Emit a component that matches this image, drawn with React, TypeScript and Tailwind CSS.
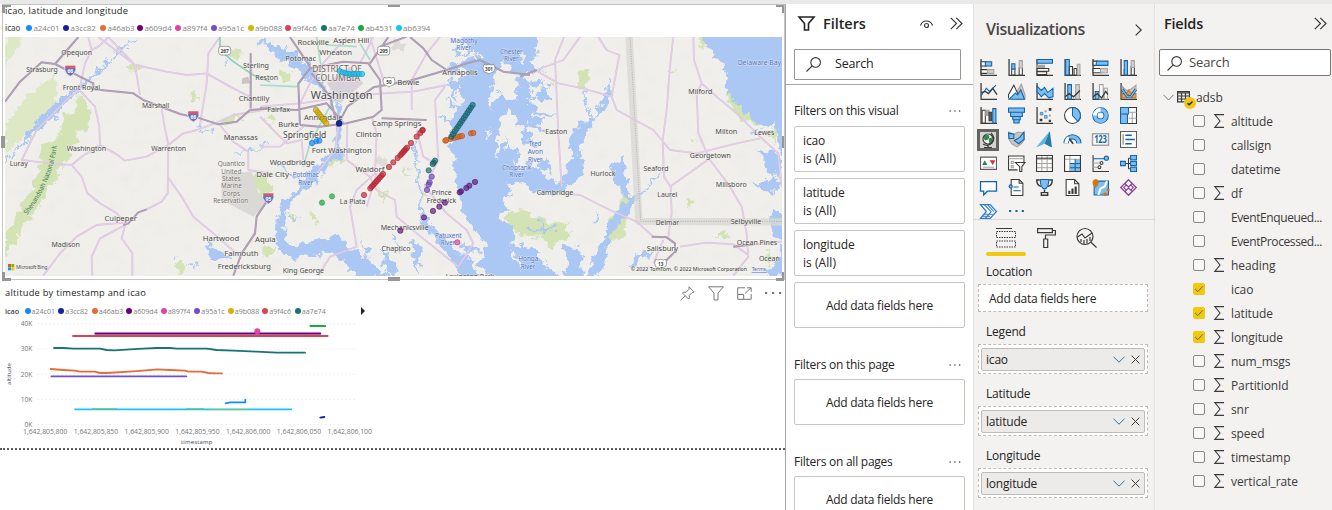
import React from "react";

const D = "#3b3a39";
const B = "#0f65ab";
const L = "#7fbcf0";
const G = "#a6a4a2";

type Pt = [number, number];

const Icon = ({ children, className = "h-[17px] w-[17px]", box = "0 0 16 16" }: { children: React.ReactNode; className?: string; box?: string }) => (
  <svg viewBox={box} className={`${className} shrink-0 overflow-visible`} fill="none" stroke={D} strokeWidth={1}>
    {children}
  </svg>
);

/* ---------- legends ---------- */
const mapLegend = [
  ["a24c01", "bg-[#118dff]", "w-[37px]"],
  ["a3cc82", "bg-[#12239e]", "w-[37px]"],
  ["a46ab3", "bg-[#e66c37]", "w-[37px]"],
  ["a609d4", "bg-[#6b007b]", "w-[38px]"],
  ["a897f4", "bg-[#e044a7]", "w-[35.5px]"],
  ["a95a1c", "bg-[#744ec2]", "w-[37px]"],
  ["a9b088", "bg-[#d9b300]", "w-[37.5px]"],
  ["a9f4c6", "bg-[#d64550]", "w-[35.5px]"],
  ["aa7e74", "bg-[#197278]", "w-[37.5px]"],
  ["ab4531", "bg-[#1aab40]", "w-[37.5px]"],
  ["ab6394", "bg-[#15c6f4]", "w-[37px]"],
];
const chartWidths = ["w-[33.7px]", "w-[33.5px]", "w-[34.5px]", "w-[34.5px]", "w-[33.5px]", "w-[33.5px]", "w-[34.5px]", "w-[32.5px]", "w-[34px]"];

/* ---------- map ---------- */
const Label = ({ x, y, w, s = 23, c = "#4b4b4b", children }: { x: number; y: number; w: number; s?: number; c?: string; children: string }) => (
  <text x={x - w / 2} y={y + s * 0.34} fontSize={s} fill={c} stroke="#f5f4f1" strokeWidth={s / 7} strokeOpacity={0.7} paintOrder="stroke" textLength={w} lengthAdjust="spacingAndGlyphs">
    {children}
  </text>
);

const Dots = ({ pts, fill, edge }: { pts: Pt[]; fill: string; edge: string }) => (
  <g fill={fill} fillOpacity={0.7} stroke={edge} strokeWidth={2} strokeOpacity={0.85}>
    {pts.map(([x, y], i) => (
      <circle key={i} cx={x} cy={y} r={8} />
    ))}
  </g>
);

const line = (a: Pt, b: Pt, n: number): Pt[] =>
  Array.from({ length: n }, (_, i) => [a[0] + ((b[0] - a[0]) * i) / (n - 1), a[1] + ((b[1] - a[1]) * i) / (n - 1)]);

const Roads = ({ d }: { d: string }) => (
  <>
    <path d={d} stroke="#dac2df" strokeWidth={5.5} />
    <path d={d} stroke="#e8d9ea" strokeWidth={2} />
  </>
);
const Highways = ({ d }: { d: string }) => (
  <>
    <path d={d} stroke="#a594ac" strokeWidth={6} />
    <path d={d} stroke="#bcaec1" strokeWidth={2} />
  </>
);

const Interstate = ({ x, y, n }: { x: number; y: number; n: string }) => (
  <g>
    <path d={`M${x - 15} ${y - 14}h30l2 12q-3 14-17 20q-14-6-17-20z`} fill="#6a72b8" stroke="#fff" strokeWidth={2} />
    <path d={`M${x - 15} ${y - 14}h30v7h-30z`} fill="#dd5a62" />
    <text x={x} y={y + 9} fontSize={15} fontWeight={700} fill="#fff" textAnchor="middle">{n}</text>
  </g>
);
const Shield = ({ x, y, n }: { x: number; y: number; n: string }) => (
  <g>
    <path d={`M${x - 15} ${y - 14}q7 4 15 0q8 4 15 0q6 12 0 22q-8 2-15 7q-7-5-15-7q-6-10 0-22z`} fill="#fff" stroke="#777" strokeWidth={2} />
    <text x={x} y={y + 6} fontSize={14} fontWeight={700} fill="#444" textAnchor="middle">{n}</text>
  </g>
);

const MapCanvas = () => (
  <svg viewBox="5 37 777 239" className="ml-[3px] block h-[239px] w-[777px] bg-[#f0efeb] font-['Noto_Sans','Open_Sans',sans-serif]" fill="none" strokeLinejoin="round">
    <defs>
      <filter id="shore" x="0" y="0" width="1332" height="510" filterUnits="userSpaceOnUse">
        <feTurbulence type="fractalNoise" baseFrequency="0.13" numOctaves="4" seed="7" />
        <feDisplacementMap in="SourceGraphic" scale="13" xChannelSelector="R" yChannelSelector="G" />
      </filter>
      <filter id="relief" x="0" y="0" width="1332" height="510" filterUnits="userSpaceOnUse">
        <feTurbulence type="fractalNoise" baseFrequency="0.06" numOctaves="3" seed="3" />
        <feColorMatrix values="0 0 0 0 .7  0 0 0 0 .7  0 0 0 0 .68  0 1.6 0 0 -.72" />
      </filter>
    </defs>
    <rect x="5" y="37" width="220" height="239" filter="url(#relief)" opacity=".18" />

    <g filter="url(#shore)">
      {/* parks */}
      <g fill="#d3e3b4">
        <g transform="scale(.33333)">
          <path d="M15 380L60 320L110 260L165 220L172 280L160 330L110 370L60 420L15 455Z" fill="#dfe8c4" />
          <path d="M15 111H65L60 140L15 190Z" fill="#dfe8c4" />
          <path d="M230 285L262 300L268 350L262 395L225 390L235 420L215 440L205 480L180 500L175 540L150 560L130 600L95 640L70 680L50 720L15 770V700L45 660L60 620L90 580L110 520L130 480L125 430L165 420L195 370L190 345L230 340Z" />
          <path d="M375 200L418 198L415 212L380 210ZM575 275L590 275L600 300L575 305ZM640 365L700 345L725 352L690 375ZM520 790L550 785L560 805L540 820ZM755 530L810 520V590L780 590ZM675 155L720 150L715 180Z" />
        </g>
        <g transform="translate(260) scale(.33333)">
          <path d="M0 545L20 540L35 570L15 590L0 590ZM190 480L250 470L255 482L200 495ZM90 640L110 650L100 670ZM150 640L180 650L165 665ZM350 560L380 580L370 610ZM0 750L40 740L50 760L15 765ZM740 640L785 630L800 700L750 690ZM480 560L500 590L480 590Z" />
          <path d="M60 220L85 215L95 250L75 245ZM20 350L45 360L30 375ZM440 500L450 530L430 520Z" />
          <path d="M345 465L380 475L370 500L350 495ZM400 120L440 130L430 160L400 150Z" fill="#dddcd8" />
        </g>
        <g transform="translate(520) scale(.33333)">
          <path d="M180 215L208 208L200 250L176 265ZM445 210L475 208L470 220L450 222ZM505 423L530 418L520 436ZM500 600L520 602L518 617L502 615ZM530 115L557 111L553 150L540 140ZM620 275L655 310L715 365L740 385L680 365L640 330ZM305 570L335 580L325 620L315 680L320 710L260 727L258 700L270 650L300 625ZM85 245L105 250L100 260Z" />
          <path d="M-20 650L60 655L90 670L130 680L150 705L100 740L50 705L0 705ZM750 400L768 370L765 440L750 420ZM735 780L755 740L745 800ZM580 710L620 690L630 715Z" />
        </g>
      </g>

      {/* water */}
      <g fill="#abc7f3">
        <g transform="translate(410 36) scale(.33333)">
          <path d="M150 -20L160 20L185 40L205 60L212 72L195 60L170 62L150 85L172 100L160 118L140 140L160 150L140 175L165 190L150 210L135 235L120 260L125 290L118 320L128 350L132 400L140 430L145 480L160 520L175 560L200 590L225 620L228 640L215 665L200 690L225 700L240 730H450L420 700L395 690L370 650L330 640L310 625L300 640L318 600L290 560L265 530L290 520L275 495L300 470L290 440L340 440L360 462L400 470L440 478L470 455L450 440L410 425L380 395L345 370L350 320L380 330L350 290L355 260L400 290L380 250L360 230L390 220L350 190L370 180L350 150L345 120L375 100L360 70L380 40L375 -20Z" />
          <path fill="#f0efeb" d="M280 75L265 110L250 150L240 190L232 222L245 215L258 180L275 160L280 190L300 195L320 190L310 165L330 150L315 130L340 120L310 108L295 90Z" />
          <path fill="#f0efeb" d="M300 220L275 250L265 290L262 320L255 350L258 365L270 330L285 300L290 350L300 320L320 350L325 385L300 370L330 400L365 405L350 370L358 340L335 310L340 270L320 250ZM235 275Q215 290 235 310L238 305Q226 290 240 278ZM330 50L345 55L342 85L332 80ZM310 650L345 668L350 720L330 710Z" />
          <path fill="#d3e3b4" d="M295 528L340 518L370 545L420 560L475 560L470 600L430 620L380 605L330 600L312 570Z" />
          <path stroke="#abc7f3" strokeWidth="7" d="M130 40L155 60M110 85L150 100M115 150L155 160M110 190L140 220M95 240L125 260M375 180L420 190L400 150M370 230L430 240M380 260L410 250M340 140L380 150L400 130M300 440L290 400M340 410L400 400M320 260L350 240M210 640L170 650L150 625M350 580L400 585L440 575M390 560L400 600" />
        </g>
        <g transform="translate(260) scale(.33333)">
          <path d="M228 310L243 320L247 380L239 440L254 462L246 472L207 488L186 530L144 562L97 598L80 640L72 700L90 738L130 728L200 714L235 700L262 735L290 760L340 790L390 835H290L255 790L235 770L215 755L160 765L100 778L62 762L47 720L50 650L70 600L110 570L140 530L158 500L203 475L228 440L232 380Z" />
          <path d="M484 640L497 660L522 686L560 718L590 750L640 790L660 835H610L570 770L520 715L482 668Z" />
          <path d="M300 705L320 750L338 827H315L318 770ZM370 730L380 770L410 800L400 827H385L368 780Z" />
          <g stroke="#abc7f3">
            <path strokeWidth="8" d="M0 125L60 145L110 160L150 200L190 260L230 310" />
            <path strokeWidth="6" d="M462 420L470 500L480 560L484 650" />
            <path strokeWidth="5" d="M40 485L70 500L95 525L130 545M80 640L110 660M400 700L420 760M450 720L480 740L470 827M560 190L600 200L570 230L600 260L570 280L590 300M575 320L600 330M650 150L600 170" />
          </g>
        </g>
        <g transform="translate(520) scale(.33333)">
          <path d="M548 100L560 140L600 180L620 230L617 270L640 300L700 360L735 388L765 370L778 440L800 520V100Z" />
          <path d="M705 440L735 455L775 462L785 500L765 530L740 515L735 475ZM690 548L740 545L770 530L786 560L750 580L725 562ZM745 650L770 630L800 660V830H735L765 790L785 730L755 700Z" />
          <path d="M238 735L272 690L262 760L235 835H195L215 780ZM125 740L180 740L190 835H130L145 790ZM0 730L55 760L75 780L70 835H0Z" />
          <g stroke="#abc7f3">
            <path strokeWidth="11" d="M120 555L145 550L175 525L190 485L160 455" />
            <path strokeWidth="5" d="M170 470L150 430L160 390L215 355L260 320L275 240M190 270L195 300L215 350M420 515L380 570L330 600L290 640L265 680L260 720M330 600L285 550L275 510L310 470M235 630L225 670M405 750L350 770L330 800" />
            <path strokeWidth="9" d="M325 602L285 645L262 700" />
            <path strokeWidth="5" d="M60 150L30 180M40 250L90 260M30 300L90 290M20 330L80 340M40 370L70 390M80 480L50 490L90 520M690 400L720 390M30 220L70 210" />
          </g>
        </g>
        <g transform="scale(.33333)" stroke="#abc7f3" strokeWidth="4">
          <path d="M15 485L60 440L100 380L150 330L180 290L235 265L290 215L330 180L360 150L410 111M590 385L640 395M710 460L810 430M520 780L530 770M620 730L640 780L700 770M560 800L600 790M675 180L680 200" strokeDasharray="22 3" />
        </g>
      </g>
    </g>

    {/* roads */}
    <g transform="scale(.33333)">
      <path d="M665 520L755 515L780 590L810 600L760 650L665 600Z" fill="#dad9d5" />
      <path d="M727 235L745 230L750 250L725 252Z" fill="#cdc2c6" />
      <Roads d="M265 111L275 150L255 190L238 270L210 290L160 340L110 390L65 480L150 490L215 495L245 470L300 435L345 460L375 482L440 470L505 435L550 400L590 390L640 372L700 345L790 330M238 270L285 320L298 380L300 435M215 495L245 530L262 580L300 610L350 640L375 665M325 111L295 140L275 150M325 111L405 195L420 285M295 111L405 195L500 215L560 225L620 220L700 265L770 300M660 111L625 160L620 250L600 375M485 325L492 370L505 435L503 580L485 605L440 628M503 530L545 590L580 650L640 700L720 770M660 375L700 425L745 455L745 510L810 520M375 675L300 715L275 770L277 827M375 675L365 715L397 760V827M375 668L290 675L230 710L180 760L130 827" />
      <path d="M660 111V150L700 185L760 225L810 245" stroke="#8fcdb9" strokeWidth="5" />
      <Highways d="M15 305L60 245L125 187L165 192L280 250V268L400 280L430 300L540 342L600 355L655 373L710 365L750 330L810 325M165 192L235 111M752 325V160M810 590L770 650L765 700L725 760L700 827M370 675L385 670L415 637L440 628" />
    </g>
    <g transform="translate(260) scale(.33333)">
      <Roads d="M0 320L120 310L260 290L370 280L460 275L560 255M120 310L150 250L180 200L260 111M235 380L225 450L170 520M262 370L260 480L330 530L350 570L405 600L410 650L470 700L595 800L640 730L620 690L560 640M335 350L350 400L345 520L290 570L270 620L290 740L210 770L175 827M455 330L455 240L500 160L540 111M555 260L525 300L535 480L495 560L560 640M470 390L490 470L525 490M370 240L330 111M300 190L340 111M0 350L80 430L125 420L130 480M0 440L60 440L130 380M190 400L155 440M320 620L350 520" />
      <path d="M0 255L110 260L140 220M190 250L170 111M300 130L330 180M220 300L150 430L130 500M200 135L290 140" stroke="#a5dccb" strokeWidth="5" />
      <path d="M200 250L270 200L310 250L240 310Z" fill="#d9d1da" />
      <Highways d="M120 375L115 250L150 205L250 185L325 190L360 240L365 330L340 350L260 370L180 380L120 375M330 190L385 111M0 325L110 330L200 310L235 350M230 380L262 320L340 262L450 242L560 210L620 190L660 180L730 215L810 225M365 355L500 360M450 111L490 145L515 180L560 210M360 140L440 110M150 200L90 111M155 220L210 290L225 350" />
    </g>
    <g transform="translate(520) scale(.33333)">
      <path d="M327 100L357 664L800 666" stroke="#d9d8d4" strokeWidth="22" strokeOpacity=".8" />
      <path d="M330 105L362 664H800" stroke="#999" strokeWidth="2" strokeDasharray="3 4" />
      <Roads d="M132 111L105 180L115 400L125 560M45 210L115 250L190 265L275 290L290 330L400 390L450 450L530 460L650 430L720 415M180 111L130 180L50 210M235 111L260 150L298 165L275 290M460 111L450 200L440 330L428 420L432 530L452 560L455 640L445 710M520 111L522 180L545 250L530 280L535 400L570 480L630 560L665 620L680 700L685 770L640 827M545 250L590 290L650 340L720 410L775 460L785 560M570 475L450 560M180 585L270 630L350 665L400 710M180 585L130 580M480 740L560 728L640 733L685 765M640 740L786 725M430 720L400 790" />
      <Highways d="M0 230L50 210M395 710L440 712L465 730V755L430 790M640 740L700 733" />
    </g>

    {/* labels */}
    <g transform="scale(.33333)">
      <Label x={230} y={156} w={92}>Opequon</Label>
      <Label x={126} y={208} w={94}>Strasburg</Label>
      <Label x={244} y={263} w={112}>Front Royal</Label>
      <Label x={467} y={315} w={82}>Marshall</Label>
      <Label x={768} y={196} w={78}>Sterling</Label>
      <Label x={800} y={233} w={68}>Reston</Label>
      <Label x={762} y={296} w={92}>Chantilly</Label>
      <Label x={836} y={329} w={68}>Fairfax</Label>
      <Label x={259} y={445} w={118}>Washington</Label>
      <Label x={506} y={445} w={105}>Warrenton</Label>
      <Label x={722} y={413} w={102}>Manassas</Label>
      <Label x={56} y={490} w={54}>Luray</Label>
      <Label x={362} y={655} w={97}>Culpeper</Label>
      <Label x={197} y={733} w={85}>Madison</Label>
      <Label x={663} y={714} w={109}>Hartwood</Label>
      <Label x={796} y={718} w={62}>Aquia</Label>
      <Label x={724} y={760} w={102}>Falmouth</Label>
      <Label x={733} y={799} w={160}>Fredericksburg</Label>
      <Label x={694} y={491} w={82} s={20} c="#77736f">Quantico</Label>
      <Label x={694} y={514} w={60} s={20} c="#77736f">United</Label>
      <Label x={694} y={536} w={56} s={20} c="#77736f">States</Label>
      <Label x={694} y={558} w={62} s={20} c="#77736f">Marine</Label>
      <Label x={694} y={580} w={52} s={20} c="#77736f">Corps</Label>
      <Label x={692} y={602} w={105} s={20} c="#77736f">Reservation</Label>
      <path id="ridge" d="M82 645Q158 545 171 432" />
      <text fontSize="21" fill="#3f7d55"><textPath href="#ridge" textLength="228" lengthAdjust="spacingAndGlyphs">Shenandoah National Park</textPath></text>
      <Interstate x={211} y={211} n="66" />
      <Interstate x={580} y={348} n="66" />
      <Interstate x={805} y={594} n="95" />
      <rect x="656" y="139" width="36" height="26" rx="8" fill="#fff" stroke="#777" strokeWidth="2" />
      <text x="674" y="158" fontSize="15" fontWeight="700" fill="#444" textAnchor="middle">267</text>
      <path d="M24 792h9v9h-9z" fill="#f25022" /><path d="M34 792h9v9h-9z" fill="#7fba00" /><path d="M24 802h9v9h-9z" fill="#00a4ef" /><path d="M34 802h9v9h-9z" fill="#ffb900" />
      <text x="48" y="808" fontSize="15" fill="#555" textLength="94">Microsoft Bing</text>
    </g>
    <g transform="translate(260) scale(.33333)">
      <Label x={160} y={126} w={95}>Rockville</Label>
      <Label x={274} y={123} w={108} s={22}>Aspen Hill</Label>
      <Label x={227} y={158} w={98}>Wheaton</Label>
      <Label x={122} y={174} w={92}>Potomac</Label>
      <Label x={231} y={206} w={148} s={27} c="#7b5f5f">DISTRICT OF</Label>
      <Label x={233} y={235} w={134} s={27} c="#7b5f5f">COLUMBIA</Label>
      <Label x={245} y={285} w={186} s={33}>Washington</Label>
      <Label x={190} y={351} w={116}>Annandale</Label>
      <Label x={86} y={372} w={62}>Burke</Label>
      <Label x={134} y={405} w={130} s={26}>Springfield</Label>
      <Label x={410} y={370} w={148}>Camp Springs</Label>
      <Label x={326} y={403} w={78}>Clinton</Label>
      <Label x={245} y={451} w={180}>Fort Washington</Label>
      <Label x={97} y={488} w={136}>Woodbridge</Label>
      <Label x={38} y={523} w={98}>Dale City</Label>
      <Label x={330} y={507} w={87}>Waldorf</Label>
      <Label x={278} y={604} w={77}>La Plata</Label>
      <Label x={434} y={682} w={144}>Mechanicsville</Label>
      <Label x={408} y={745} w={87}>Chaptico</Label>
      <Label x={130} y={811} w={124}>King George</Label>
      <Label x={545} y={577} w={60}>Prince</Label>
      <Label x={544} y={600} w={88}>Frederick</Label>
      <Label x={600} y={218} w={106}>Annapolis</Label>
      <Label x={445} y={248} w={66}>Bowie</Label>
      <Label x={630} y={830} w={146}>Lexington Park</Label>
      <Label x={612} y={122} w={82} s={21} c="#4a70c8">Magothy</Label>
      <Label x={611} y={143} w={44} s={21} c="#4a70c8">River</Label>
      <Label x={754} y={155} w={68} s={21} c="#4a70c8">Chester</Label>
      <Label x={754} y={177} w={44} s={21} c="#4a70c8">River</Label>
      <Label x={137} y={524} w={78} s={21} c="#4a70c8">Potomac</Label>
      <Label x={137} y={547} w={44} s={21} c="#4a70c8">River</Label>
      <Label x={565} y={706} w={80} s={21} c="#4a70c8">Patuxent</Label>
      <Label x={564} y={728} w={44} s={21} c="#4a70c8">River</Label>
      <Label x={770} y={502} w={88} s={21} c="#4a70c8">Choptank</Label>
      <Label x={770} y={524} w={44} s={21} c="#4a70c8">River</Label>
      <rect x="353" y="139" width="36" height="26" rx="6" fill="#fff" stroke="#777" strokeWidth="2" />
      <text x="371" y="158" fontSize="15" fontWeight="700" fill="#444" textAnchor="middle">295</text>
      <Shield x={387} y={246} n="50" />
      <Shield x={687} y={207} n="301" />
    </g>
    <g transform="translate(520) scale(.33333)">
      <Label x={109} y={393} w={66}>Easton</Label>
      <Label x={105} y={578} w={110}>Cambridge</Label>
      <Label x={249} y={519} w={75}>Hurlock</Label>
      <Label x={541} y={274} w={72}>Milford</Label>
      <Label x={619} y={393} w={66}>Milton</Label>
      <Label x={733} y={397} w={60}>Lewes</Label>
      <Label x={571} y={467} w={123}>Georgetown</Label>
      <Label x={408} y={504} w={75}>Seaford</Label>
      <Label x={634} y={552} w={93}>Millsboro</Label>
      <Label x={442} y={582} w={60}>Laurel</Label>
      <Label x={442} y={667} w={70}>Delmar</Label>
      <Label x={678} y={663} w={92}>Selbyville</Label>
      <Label x={427} y={744} w={94}>Salisbury</Label>
      <Label x={711} y={726} w={121}>Ocean Pines</Label>
      <Label x={748} y={774} w={62}>Ocean</Label>
      <Label x={718} y={187} w={130} s={22} c="#4a70c8">Delaware Bay</Label>
      <Label x={45} y={432} w={38} s={21} c="#4a70c8">Tred</Label>
      <Label x={46} y={455} w={46} s={21} c="#4a70c8">Avon</Label>
      <Label x={46} y={478} w={44} s={21} c="#4a70c8">River</Label>
      <Label x={25} y={776} w={60} s={21} c="#4a70c8">Honga</Label>
      <Label x={24} y={799} w={44} s={21} c="#4a70c8">River</Label>
      <Shield x={422} y={792} n="13" />
      <text x="332" y="813" fontSize="17" fill="#333" stroke="#f5f4f1" strokeWidth="3" strokeOpacity=".6" paintOrder="stroke" textLength="349" lengthAdjust="spacingAndGlyphs">© 2022 TomTom, © 2022 Microsoft Corporation</text>
      <text x="695" y="813" fontSize="17" fill="#4a70c8" textDecoration="underline" textLength="43" lengthAdjust="spacingAndGlyphs">Terms</text>
    </g>

    {/* data points */}
    <g transform="translate(260) scale(.33333)">
      <Dots fill="#15c6f4" edge="#0f8fb5" pts={[[239, 213], [248, 217], [256, 219], [264, 221], [272, 222], [281, 222], [289, 222], [297, 222], [306, 222]]} />
      <Dots fill="#d9b300" edge="#9c8200" pts={line([168, 330], [199, 370], 7)} />
      <Dots fill="#12239e" edge="#0c1870" pts={[[237, 371], [237, 369], [238, 370]]} />
      <Dots fill="#118dff" edge="#1878cc" pts={[[156, 429], [169, 424], [178, 422]]} />
      <Dots fill="#1aab40" edge="#249a42" pts={[[216, 589], [186, 608]]} />
      <Dots fill="#d02b3a" edge="#98202c" pts={[[312, 585], ...line([331, 565], [369, 522], 9), [387, 501], [400, 487], [413, 474], ...line([421, 466], [441, 443], 6), [453, 429], [470, 410], [481, 399], [488, 390], [487, 391]]} />
      <Dots fill="#e0651f" edge="#b54a12" pts={[[556, 422], [559, 420], [572, 417], [584, 413], [592, 411], [600, 409], [606, 408], [633, 400], [640, 399]]} />
      <Dots fill="#197278" edge="#0d5459" pts={[...line([574, 410], [638, 315], 13), [525, 482], [521, 488], [518, 492], [506, 511]]} />
      <Dots fill="#744ec2" edge="#553699" pts={[[515, 530], [509, 547], [506, 554], [501, 570]]} />
      <Dots fill="#6b1a86" edge="#47105a" pts={[[645, 546], [628, 557], [619, 564], [603, 574], [599, 577], [555, 608], [538, 620], [519, 633], [492, 652], [421, 692]]} />
      <Dots fill="#e044a7" edge="#b02f82" pts={[[592, 727]]} />
    </g>
  </svg>
);

/* ---------- line chart ---------- */
const yTicks: [string, number][] = [["40K", 131], ["30K", 207], ["20K", 283], ["10K", 358], ["0K", 433]];
const LineChart = () => (
  <svg viewBox="0 318 400 128" className="block h-[128px] w-[400px] font-['Open_Sans','Noto_Sans',sans-serif]" fill="none">
    <g transform="translate(0 280) scale(.33333)" fontSize="20" strokeLinecap="round" strokeLinejoin="round">
      {yTicks.map(([t, y]) => (
        <g key={t}>
          <text x={97} y={y + 7} textAnchor="end" fill="#777">{t}</text>
          <path d={`M114 ${y}H1065`} stroke="#dedede" strokeWidth={2.5} strokeDasharray="1 11" />
        </g>
      ))}
      {["805,800", "805,850", "805,900", "805,950", "806,000", "806,050", "806,100"].map((t, i) => (
        <text key={t} x={69 + i * 152.3} y={461} fill="#777" textLength={133} lengthAdjust="spacingAndGlyphs">{`1,642,${t}`}</text>
      ))}
      <text x={543} y={491} fontSize={18} fill="#3d4657" textLength={94}>timestamp</text>
      <text x={0} y={0} fontSize={18} fill="#3d4657" textLength={66} transform="translate(32 315) rotate(-90)">altitude</text>
      <g strokeWidth={5.5}>
        <path d="M931 138H976" stroke="#1aab40" />
        <path d="M286 162H961" stroke="#b288c4" />
        <path d="M286 160H961" stroke="#6b007b" />
        <path d="M219 168H983" stroke="#d64550" />
        <path d="M162 204H190L220 206H300L320 210L343 211L390 208L430 206L470 204H510L530 206H620L650 210L700 212L770 215L830 218H915" stroke="#197278" />
        <path d="M152 267L190 270L225 272L240 275H285L300 279L320 279L400 274L473 268L510 270L555 272L565 275H605L625 279L645 280H666" stroke="#e66c37" />
        <path d="M154 289H559" stroke="#744ec2" />
        <path d="M677 370L690 367H736V359" stroke="#118dff" />
        <path d="M225 388H874" stroke="#15c6f4" />
        <path d="M277 386H350M560 386H610M630 389H745" stroke="#8dbf6a" strokeWidth={3} />
        <path d="M961 413L973 411" stroke="#12239e" />
      </g>
      <circle cx={772} cy={154} r={9} fill="#e044a7" />
    </g>
  </svg>
);

/* ---------- visual picker icons ---------- */
const Axis = () => <path d="M1 0V15.5H16" strokeWidth={1.2} />;
const visuals: React.ReactNode[] = [
  <><Axis /><path d="M1 2.5h5v4H1z" fill="#fff" /><path d="M5 2.5h6v4H5z" fill={L} stroke={B} /><path d="M1 10h8v3.5H1z" fill="#fff" /><path d="M7 10h6v3.5H7z" fill="#d2d0ce" stroke={G} /></>,
  <><Axis /><path d="M3.5 9h3v6h-3zM10.500 8h3v7h-3z" fill="#fff" /><path d="M3.500 4.500h3v5h-3z" fill={L} stroke={B} /><path d="M10.500 1.500h3v7h-3z" fill="#d2d0ce" stroke={G} /></>,
  <><Axis /><path d="M1 .5h14.500v3.500H1z" fill={L} stroke={B} /><path d="M1 6h7v2.500H1z" fill={G} stroke={G} /><path d="M1 9h11v2.500H1zM1 12h9v2.500H1z" fill="#fff" /></>,
  <><Axis /><path d="M1.500.5H5V15H1.500z" fill={L} stroke={B} /><path d="M5 7h3v8H5zM9.500 9h2.500v6H9.500z" fill="#fff" /><path d="M12.500 5h2.500v10h-2.500z" fill="#d2d0ce" stroke={G} /></>,
  <><Axis /><path d="M1 2h4v4H1z" fill="#fff" /><path d="M4 2h11v4H4z" fill={L} stroke={B} /><path d="M1 9h8v4H1z" fill="#fff" /><path d="M8 9h6.500v4H8z" fill="#d2d0ce" stroke={G} /></>,
  <><Axis /><path d="M4 10h3v5H4zM10.500 7h3v8h-3z" fill="#fff" /><path d="M4 1.500h3V15H4z" fill={L} stroke={B} /><path d="M10.500 1.500h3V8h-3z" fill="#d2d0ce" stroke={G} /></>,
  <><Axis /><path d="M1 12L6 5l3 3 6-6" stroke={B} /><path d="M1 9l4-1 3 2 4-5 4 6" strokeWidth={1.200} /></>,
  <><path d="M8 9l4.500-8L16 11v4H8z" fill="#c8c6c4" stroke={G} /><path d="M.5 14.500V11L5.500 2 11 14" fill="#fff" /><path d="M1 15.300l6-6 2 2 3-5 3.500 9z" fill={L} stroke={B} /></>,
  <><Axis /><path d="M1 3l4 4 3-3 3 5 5-4v8l-4 1-4-4-3 3-4-5z" fill={L} stroke={B} /></>,
  <><Axis /><path d="M3.500 1.500H7V15H3.500z" fill={L} stroke={B} /><path d="M11 1.500h3.500V15H11z" fill="#d2d0ce" stroke={G} /><path d="M1 13l4-3 4 3 6-6" strokeWidth={1.200} /></>,
  <><Axis /><path d="M3 8h3.500v7H3z" fill={L} stroke={B} /><path d="M7 1.500h3.500V15H7zM11.500 5h3v10h-3z" fill="#fff" stroke={G} /><path d="M1 13l4-3 4 4 4-6 2 3" strokeWidth={1.200} /></>,
  <><Axis /><path d="M2 3l4 4 4-1 5-4v4l-4 4H6L2 7z" fill="#c8c6c4" stroke={G} /><path d="M2 10h4l2-3 3 3h4v4h-4l-3-3-2 3H2z" fill="#f5a04a" stroke="#d9730f" /><path d="M2 6l5 7h3l5-7" stroke={B} strokeWidth={2.800} /><path d="M2 6l5 7h3l5-7" stroke={L} strokeWidth={1.200} /></>,
  <><Axis /><path d="M2 3h3v12H2z" fill="#fff" /><path d="M5.500 3h3v5h-3z" fill={G} stroke={G} /><path d="M8.500 5h2.500v8H8.500z" fill="#605e5c" /><path d="M12 1.500h3V15h-3z" fill={L} stroke={B} /></>,
  <><path d="M.5 1h15v4H.5zM2.500 5h11v4h-11zM4.500 9h7v3h-7zM5.500 12h5v3h-5z" fill={L} stroke={B} /></>,
  <><Axis /><path d="M12 1h2.500v2.500H12zM3.500 11H6v2.500H3.500zM12 12h2v2h-2z" fill={D} stroke="none" /><path d="M4 5h2.500v2.500H4zM8 8h2.500v2.500H8z" fill={L} stroke={B} strokeWidth={0.500} /><path d="M8 3h2v2H8zM12 7h2v2h-2z" fill={G} stroke="none" /></>,
  <><circle cx="8" cy="8" r="7.500" fill="#fff" /><path d="M8 .5A7.500 7.500 0 0 1 13 13.500L8 8z" fill={L} stroke={B} /></>,
  <><circle cx="8" cy="8" r="5.300" stroke={B} strokeWidth={5} /><circle cx="8" cy="8" r="5.300" stroke={L} strokeWidth={3.400} /><path d="M2.700 8A5.300 5.300 0 0 1 8 2.700" stroke="#fff" strokeWidth={3.500} /></>,
  <><path d="M.5.5h15v15H.5z" fill="#fff" /><path d="M.5.5h7.500v6H.5zM.5 6.500H7v9H.5z" fill={L} stroke={B} /><path d="M8 5h7.500M8 10.500h7.500M11.500 5v10" stroke={G} /></>,
  <><circle cx="8" cy="7" r="5" fill="#fff" strokeWidth={1.200} /><path d="M6 3l3 1-1 3-3 1-1-3zM9 7l3-1v3l-2 2z" fill="#2d8a4e" stroke="#2d8a4e" /><path d="M11 1q5 5 1 10q-4 4-9 1M8 13v2.500M4 15.500h8" strokeWidth={1.200} /></>,
  <><path d="M.5 1l5 2 4-2 6 1v6l-3 4-4 3-5-3-3-5z" fill="#c8c6c4" stroke={G} /><path d="M.5 2l5 1v4H1zM6 9l5-3 4-5v7l-5 4z" fill={L} stroke={B} /></>,
  <><path d="M13 0L0 15.500l8-3.500z" fill="#55b8e8" stroke="none" /><path d="M13 0l2 15.500L8 12z" fill="#2779a8" stroke="none" /></>,
  <><path d="M2 11.500a6 6 0 0 1 12 0" stroke={B} strokeWidth={5} /><path d="M2 11.500a6 6 0 0 1 12 0" stroke={L} strokeWidth={3.200} /><path d="M2 11.500a6 6 0 0 1 2.500-5" stroke="#fff" strokeWidth={3} /><path d="M8.500 12L5 7" strokeWidth={1.500} /></>,
  <><path d="M.5 2.500h15v11H.5z" fill="#fff" stroke={G} strokeWidth={1.400} /><text x="2" y="11.500" fontSize="9.500" fontWeight="700" fill={B} stroke="none" textLength="12" lengthAdjust="spacingAndGlyphs">123</text></>,
  <><path d="M.5.5h15v15H.5z" fill="#fff" stroke="#605e5c" /><path d="M3 3v10" stroke={G} strokeWidth={1.500} /><path d="M5 4h6M5 8h9M5 12h6" stroke={B} strokeWidth={1.400} /></>,
  <><path d="M.5 2h15v11.500H.5z" fill="#fff" stroke="#605e5c" /><path d="M2 9.500L4.500 5 7 9.500z" fill="#2d8a4e" stroke="none" /><path d="M9 5h5.500L12 9.500z" fill="#d13438" stroke="none" /><path d="M3 11.500h10" stroke={G} /></>,
  <><path d="M15 7V1H.5v13H9" fill="#fff" /><path d="M.5 3.500H15" stroke={G} /><path d="M3 6h2v2H3zM3 10h2v2H3z" stroke={G} /><path d="M7 7h9l-3 4v4.500h-2V11z" fill="#fff" /></>,
  <><path d="M.5.5h15v15H.5z" fill="#fff" /><path d="M.5 4h15M.5 8h15M.5 12h15M5.500.5v15M10.500.5v15" stroke={G} /><path d="M.5 3h15" /><path d="M.5.5h15v15H.5z" /></>,
  <><path d="M.5.5h15v15H.5z" fill="#fff" /><path d="M5.500 8H15v7H5.500zM10.500 4H15v4h-4.500z" fill={L} stroke="none" /><path d="M.5 4h15M5.500.5v15" stroke={G} /><path d="M5.500 8h10M5.500 12h10M10.500 4v11.500" stroke={B} /><path d="M.5.5h15v15H.5z" /></>,
  <><path d="M1 0v15.500h15" /><path d="M1 3.500h11" stroke={B} /><circle cx="13.500" cy="3" r="2" fill={L} stroke={B} /><path d="M1 7.500h7M1 11.500h5" stroke={G} /><circle cx="9" cy="7.500" r="1.300" fill="#fff" /><circle cx="7" cy="11.500" r="1.300" fill="#fff" /></>,
  <><path d="M5 8h5M8 3v10M8 3h3M8 13h3" /><path d="M.5 6H5v4H.5zM10 .5h5.500v4H10zM10 6h5.500v4H10zM10 11.500h5.500v4H10z" fill={L} stroke={B} /></>,
  <path d="M.5 2.500h15v9H7L3.500 15v-3.500h-3z" fill="#fff" stroke={B} strokeWidth={1.200} />,
  <><path d="M3 .5h7.500l3.500 3.500v11.500H3z" fill="#fff" /><path d="M10.500.5V4H14" /><circle cx="2.500" cy="7" r="1.500" fill={L} stroke={B} /><path d="M5 7.500h5M5 11h7" stroke={B} /></>,
  <><path d="M3.500 1H.7q0 5 4 6M12.500 1h2.800q0 5-4 6" strokeWidth={1.300} /><path d="M4 .5h8q0 8-4 9q-4-1-4-9z" fill={L} stroke={B} /><path d="M8 10v3M5 15.300v-2.500h6v2.500z" fill="#fff" strokeWidth={1.300} /></>,
  <><path d="M2 .5h8l4 4v11H2z" fill="#fff" /><path d="M10 .5v4h4" /><path d="M5 14v-3M8 14V9M11 14V7" strokeWidth={2} /></>,
  <><path d="M2 2h13.500v13H2z" fill={L} stroke={B} /><path d="M6 15l2-6 4-2 2-5" stroke="#fff" strokeWidth={2} /><path d="M3.500 8.500Q0 5 .5 2.500Q3-2 6 1.500Q7 5 3.500 8.500z" fill="#d9730f" stroke="none" /><path d="M11 13h3v3h-3zM14 9h2.500v2.500H14z" fill="#d9730f" stroke="none" /></>,
  <><path d="M8 .7L15.300 8 8 15.300.7 8z" fill="#fff" stroke="#8f3f9c" strokeWidth={1.200} /><path d="M4.500 4L8 7.500 11.500 4M4.500 12L8 8.500 11.500 12M3.500 8L6 5.500 8.200 8 6 10.500zM12.500 8L10 5.500 7.800 8 10 10.500z" stroke="#8f3f9c" /></>,
  <><path d="M.5 1.500h9L15.500 8l-6 6.500h-9L6 8z" fill="#fff" stroke="#2b7cd3" strokeWidth={1.200} /><path d="M4 1.500L10.500 8 5 14.500M7 1.500L13 8M2.500 12.500h7M4 10.500h8" stroke="#2b7cd3" /></>,
  <><path d="M1 7.500h2M7 7.500h2M13 7.500h2" stroke={B} strokeWidth={1.800} /></>,
];

const Dots3 = () => (
  <Icon className="h-1 w-3" box="0 0 12 4"><path d="M.5 2h1.300M5.300 2h1.300M10 2h1.300" stroke="#605e5c" strokeWidth={1.300} /></Icon>
);
const Chevrons = () => (
  <Icon className="h-[13px] w-[13px]" box="0 0 13 13"><path d="M.8.8l5.700 5.700L.8 12.200M6.300.8L12 6.500l-5.700 5.700" strokeWidth={1.200} /></Icon>
);
const Magnifier = () => (
  <Icon className="h-[15px] w-[15px]" box="0 0 15 15"><circle cx="9.600" cy="5.400" r="4.800" strokeWidth={1.100} /><path d="M6.200 8.800L.5 14.500" strokeWidth={1.100} /></Icon>
);

const FilterCard = ({ name }: { name: string }) => (
  <div className="flex h-[46px] w-[171px] shrink-0 flex-col justify-center rounded-[2px] border border-[#c8c6c4] bg-white pl-2 pt-px text-[12px] leading-[18px] tracking-[-0.15px]">
    <span>{name}</span>
    <span className="tracking-[0.05px]">is (All)</span>
  </div>
);
const DropCard = () => (
  <div className="flex h-[46px] w-[171px] shrink-0 items-center justify-center rounded-[2px] border border-[#c8c6c4] bg-white pt-[2px] text-[12px] tracking-[-0.25px]">Add data fields here</div>
);
const SectionTitle = ({ text }: { text: string }) => (
  <div className="flex h-4 w-[167px] shrink-0 items-center justify-between text-[12px] tracking-[-0.25px]">
    <span className="pt-[3px]">{text}</span>
    <span className="pt-1"><Dots3 /></span>
  </div>
);

const Well = ({ name }: { name: string }) => (
  <div className="ml-1 flex h-[30px] w-[170px] shrink-0 items-center border border-dashed border-[#bebbb8] bg-white px-[2px]">
    <div className="flex h-[23px] w-full items-center rounded-[2px] border border-[#bebbb8] bg-[#edebe9] pl-1 pr-1">
      <span className="pt-px">{name}</span>
      <Icon className="ml-auto mr-[6px] h-[7px] w-3" box="0 0 12 7"><path d="M.5.8L6 6.200 11.500.8" stroke="#2f6f9f" /></Icon>
      <Icon className="h-[9px] w-[9px]" box="0 0 9 9"><path d="M.6.6l7.800 7.800M8.400.6L.6 8.400" /></Icon>
    </div>
  </div>
);

const fields: [string, boolean, boolean][] = [
  ["altitude", true, false], ["callsign", false, false], ["datetime", false, false], ["df", true, false],
  ["EventEnqueued...", false, false], ["EventProcessed...", false, false], ["heading", true, false], ["icao", false, true],
  ["latitude", true, true], ["longitude", true, true], ["num_msgs", true, false], ["PartitionId", true, false],
  ["snr", true, false], ["speed", true, false], ["timestamp", true, false], ["vertical_rate", true, false],
];

export default function App() {
  return (
    <div className="flex h-[510px] w-[1332px] flex-col overflow-hidden bg-white font-['Open_Sans','Noto_Sans',sans-serif] text-[#252423]">
      <div className="h-1 shrink-0 bg-[#e9e9e9]" />
      <div className="flex min-h-0 flex-1">
        {/* report canvas */}
        <main className="flex w-[786px] shrink-0 flex-col border-r border-[#a8a6a4] bg-white">
          <section className="relative h-[276px] w-[785px] shrink-0 pl-[2px]">
            <div className="absolute inset-y-0 left-[1.500px] right-0 border border-[#c4c4c4]" />
            <h2 className="flex h-[13px] items-center pl-[3px] text-[9.300px] tracking-[0.19px] text-[#252423]">icao, latitude and longitude</h2>
            <div className="flex h-5 items-center pb-[2px] pl-[3px] pt-[3px] text-[8px] text-[#858381]">
              <span className="w-[21px] font-semibold tracking-[-0.1px] text-[#605e5c]">icao</span>
              {mapLegend.map(([name, dot, w]) => (
                <span key={name} className={`flex shrink-0 items-center gap-[1.500px] tracking-[-0.08px] ${w}`}>
                  <i className={`h-[6px] w-[6px] shrink-0 rounded-full ${dot}`} />{name}
                </span>
              ))}
            </div>
            <MapCanvas />
            <i className="absolute left-[2px] top-[1px] h-2 w-[9px] border-l-[3px] border-t-2 border-[#979797]" />
            <i className="absolute right-[1px] top-[1px] h-2 w-2 border-r-2 border-t-2 border-[#979797]" />
            <i className="absolute bottom-[-1px] left-[2px] h-[9px] w-[9px] border-b-[3px] border-l-[3px] border-[#979797]" />
            <i className="absolute bottom-[-1px] right-[1px] h-[9px] w-2 border-b-[3px] border-r-2 border-[#979797]" />
            <i className="absolute left-[388px] top-[1px] h-[2px] w-3 bg-[#979797]" />
            <i className="absolute bottom-[-1px] left-[388px] h-1 w-3 bg-[#979797]" />
            <i className="absolute left-[1px] top-[132px] h-3 w-1 bg-[#979797]" />
            <i className="absolute right-[1px] top-[132px] h-3 w-[2px] bg-[#979797]" />
          </section>
          <section className="flex h-[170px] shrink-0 flex-col border-b-2 border-dotted border-[#5a5a5a]">
            <div className="flex h-[25px] shrink-0 items-center pl-[5px] pr-[4px] pt-[1px]">
              <h2 className="text-[9.300px] tracking-[0.24px]">altitude by timestamp and icao</h2>
              <div className="ml-auto flex items-center gap-[13px]">
                <Icon className="h-[15px] w-[15px]" box="0 0 15 15"><path d="M9 .8L14.200 6l-2 .5-3 3 .2 2.500-1 1L2.500 7l1-1 2.500.3 3-3zM5.300 9.800L.5 14.500" stroke="#797775" /></Icon>
                <Icon className="h-[15px] w-4" box="0 0 16 15"><path d="M.5.8h15L10 7v7H6V7z" stroke="#797775" /></Icon>
                <Icon className="h-[13px] w-[15px]" box="0 0 15 13"><path d="M8 .8H.7v11.500h13.500V7M.7 7.500h6v4.800M8 6.500L14 .8M10 .8h4.200v4" stroke="#797775" /></Icon>
                <Icon className="h-1 w-4" box="0 0 16 4"><path d="M0 2h2.200M7 2h2.200M14 2h2.200" stroke="#797775" strokeWidth={1.800} /></Icon>
              </div>
            </div>
            <div className="flex h-[13px] shrink-0 items-center pb-px pl-[5px] text-[7.200px] text-[#858381]">
              <span className="w-[19.500px] font-semibold text-[#3d4657]">icao</span>
              {chartWidths.map((w, i) => (
                <span key={i} className={`flex shrink-0 items-center gap-[1px] tracking-[-0.05px] ${w}`}>
                  <i className={`h-[6px] w-[6px] shrink-0 rounded-full ${mapLegend[i][1]}`} />{mapLegend[i][0]}
                </span>
              ))}
              <Icon className="ml-[32px] h-2 w-1" box="0 0 4 8"><path d="M0 0L4 4 0 8z" fill="#222" stroke="none" /></Icon>
            </div>
            <LineChart />
          </section>
        </main>

        {/* filters */}
        <aside className="flex w-[188px] shrink-0 flex-col overflow-hidden border-r border-[#e1dfdd] bg-white">
          <div className="flex h-[39px] shrink-0 items-center pl-3 pr-[10px]">
            <Icon className="h-[15px] w-[17px]" box="0 0 17 15"><path d="M1 1h15l-5.500 6.500v6.500h-4V7.500z" strokeWidth={1.600} stroke="#252423" /></Icon>
            <h3 className="ml-2 text-[14.500px] font-semibold tracking-[-0.05px]">Filters</h3>
            <Icon className="ml-auto mr-[17px] h-2 w-[13px]" box="0 0 13 8"><path d="M.5 5.500Q2 1 6.500 1T12.500 5.500" strokeWidth={1.200} /><circle cx="6.500" cy="5.500" r="2" strokeWidth={1.200} /></Icon>
            <Chevrons />
          </div>
          <div className="h-[42px] shrink-0 border-b border-[#a8a6a4] pl-2 pt-[6px]">
            <div className="flex h-[31px] w-[167px] items-center gap-[14px] rounded-[1px] border border-[#979593] pl-[11px] text-[12.500px] tracking-[-0.2px]">
              <Magnifier />Search
            </div>
          </div>
          <div className="flex flex-col pl-2 pt-[16px]">
            <SectionTitle text="Filters on this visual" />
            <div className="mb-[27px] mt-[9px] flex flex-col gap-[6px]">
              <FilterCard name="icao" />
              <FilterCard name="latitude" />
              <FilterCard name="longitude" />
              <DropCard />
            </div>
            <SectionTitle text="Filters on this page" />
            <div className="mb-[27px] mt-2"><DropCard /></div>
            <SectionTitle text="Filters on all pages" />
            <div className="mt-2"><DropCard /></div>
          </div>
        </aside>

        {/* visualizations */}
        <aside className="flex w-[181px] shrink-0 flex-col border-r border-[#e1dfdd] bg-[#f3f2f1] text-[12px] tracking-[-0.2px]">
          <div className="flex h-[50px] shrink-0 items-center pl-3 pr-3">
            <h3 className="text-[16px] font-semibold tracking-[-0.52px] text-[#4a4846]">Visualizations</h3>
            <Icon className="ml-auto mt-[2px] h-3 w-[7px]" box="0 0 7 12"><path d="M.7.6L6.200 6 .7 11.400" strokeWidth={1.200} /></Icon>
          </div>
          <div className="grid h-[166px] shrink-0 grid-cols-[repeat(6,28px)] auto-rows-[24px] border-b border-[#dcdad8] pt-[1.500px]">
            {visuals.map((v, i) => (
              <div key={i} className="flex h-6 w-7 items-center justify-center">
                {i === 18 ? (
                  <div className="flex h-[22px] w-[22px] items-center justify-center border-[3px] border-[#666462] bg-[#d6d4d2]"><Icon className="h-4 w-4">{v}</Icon></div>
                ) : (
                  <Icon>{v}</Icon>
                )}
              </div>
            ))}
          </div>
          <div className="flex h-[36px] shrink-0 items-start gap-[20px] pl-3 pt-2">
            <div className="flex h-7 w-10 flex-col items-center justify-between">
              <Icon className="h-5 w-5" box="0 0 20 20"><path d="M0 .5h16" /><path d="M.5 3.500h19v6H.5zM.5 13h19v6H.5z" strokeDasharray="1.500 1" /></Icon>
              <i className="h-1 w-10 rounded-full bg-[#f2c811]" />
            </div>
            <Icon className="-ml-[9px] h-5 w-[19px]" box="0 0 19 20"><path d="M.6.600h14.800v4H.6zM15.500 2.500h2.900v4.500H8.500v4M6.700 11h4v8.500h-4z" strokeWidth={1.200} /></Icon>
            <Icon className="h-5 w-[21px]" box="0 0 21 20"><circle cx="9" cy="8.500" r="8" strokeWidth={1.200} /><path d="M15 14.200l5.500 5.300M1.500 9L6 6l3 4 7-5M5 11v3M8 12v4M11 11v4.500M14 9v4" strokeWidth={1.200} /></Icon>
          </div>
          <div className="flex shrink-0 flex-col pt-1">
            <span className="h-5 pl-3 leading-[23px]">Location</span>
            <div className="ml-1 mt-1 flex h-[28px] w-[170px] items-center border border-dashed border-[#bebbb8] bg-white pl-[10px] pt-[2px] tracking-[-0.25px]">Add data fields here</div>
            <span className="mb-1 mt-[8px] h-5 pl-3 leading-[23px]">Legend</span>
            <Well name="icao" />
            <span className="mb-1 mt-[8px] h-5 pl-3 leading-[23px]">Latitude</span>
            <Well name="latitude" />
            <span className="mb-1 mt-[8px] h-5 pl-3 leading-[23px]">Longitude</span>
            <Well name="longitude" />
          </div>
        </aside>

        {/* fields */}
        <aside className="flex min-w-0 flex-1 flex-col bg-[#f3f2f1] text-[12px] tracking-[-0.1px]">
          <div className="flex h-[45px] shrink-0 items-start justify-between pl-[9px] pr-[5px] pt-[9px]">
            <h3 className="text-[14.500px] font-semibold leading-[21px] tracking-[-0.2px]">Fields</h3>
            <div className="pt-1"><Chevrons /></div>
          </div>
          <div className="ml-1 flex h-[27px] w-[172px] shrink-0 items-center gap-[7px] rounded-[2px] border border-[#797775] bg-white pl-[7px] pt-px text-[13px] text-[#484644]">
            <Magnifier />Search
          </div>
          <div className="mt-[9px] flex h-6 shrink-0 items-center pl-2">
            <Icon className="h-[7px] w-[11px]" box="0 0 11 7"><path d="M.5.8l5 5.200 5-5.200" stroke="#797775" /></Icon>
            <div className="relative ml-[3px]">
              <Icon className="h-3 w-[13px]" box="0 0 13 12"><path d="M.6.600h11.800v10.200H.6zM.6 2h11.800M.6 5h11.800M.6 8h11.800M4.500 2v9M8.500 2v9" strokeWidth={1.200} /></Icon>
              <Icon className="absolute left-[7px] top-[6px] h-3 w-3" box="0 0 12 12"><circle cx="6" cy="6" r="6" fill="#f2c811" stroke="none" /><path d="M3.500 6.200L5.200 7.800 8.500 4.500" strokeWidth={1.400} stroke="#222" /></Icon>
            </div>
            <span className="ml-[6px] pt-[2px] text-[#3b3a39]">adsb</span>
          </div>
          {fields.map(([name, sum, on]) => (
            <div key={name} className="flex h-6 shrink-0 items-center pl-[38px]">
              <div className={`h-3 w-3 shrink-0 rounded-[2px] border ${on ? "border-[#f2c811] bg-[#f2c811]" : "border-[#8a8886] bg-[#f8f7f6]"}`}>
                {on && <Icon className="h-[10px] w-[10px]" box="0 0 10 10"><path d="M1.200 5l2.600 2.600L8.800 2.400" stroke="#6b5d14" /></Icon>}
              </div>
              <div className="ml-[9px] w-[17px]">
                {sum && <Icon className="h-[14px] w-[10px]" box="0 0 10 14"><path d="M10 .6H.8L6 7 .8 13.400H10" strokeWidth={1.100} /></Icon>}
              </div>
              <span className={name.startsWith("Event") ? "pt-[2px] tracking-[-0.4px] text-[#3b3a39]" : "pt-[2px] text-[#3b3a39]"}>{name}</span>
            </div>
          ))}
        </aside>
      </div>
    </div>
  );
}
